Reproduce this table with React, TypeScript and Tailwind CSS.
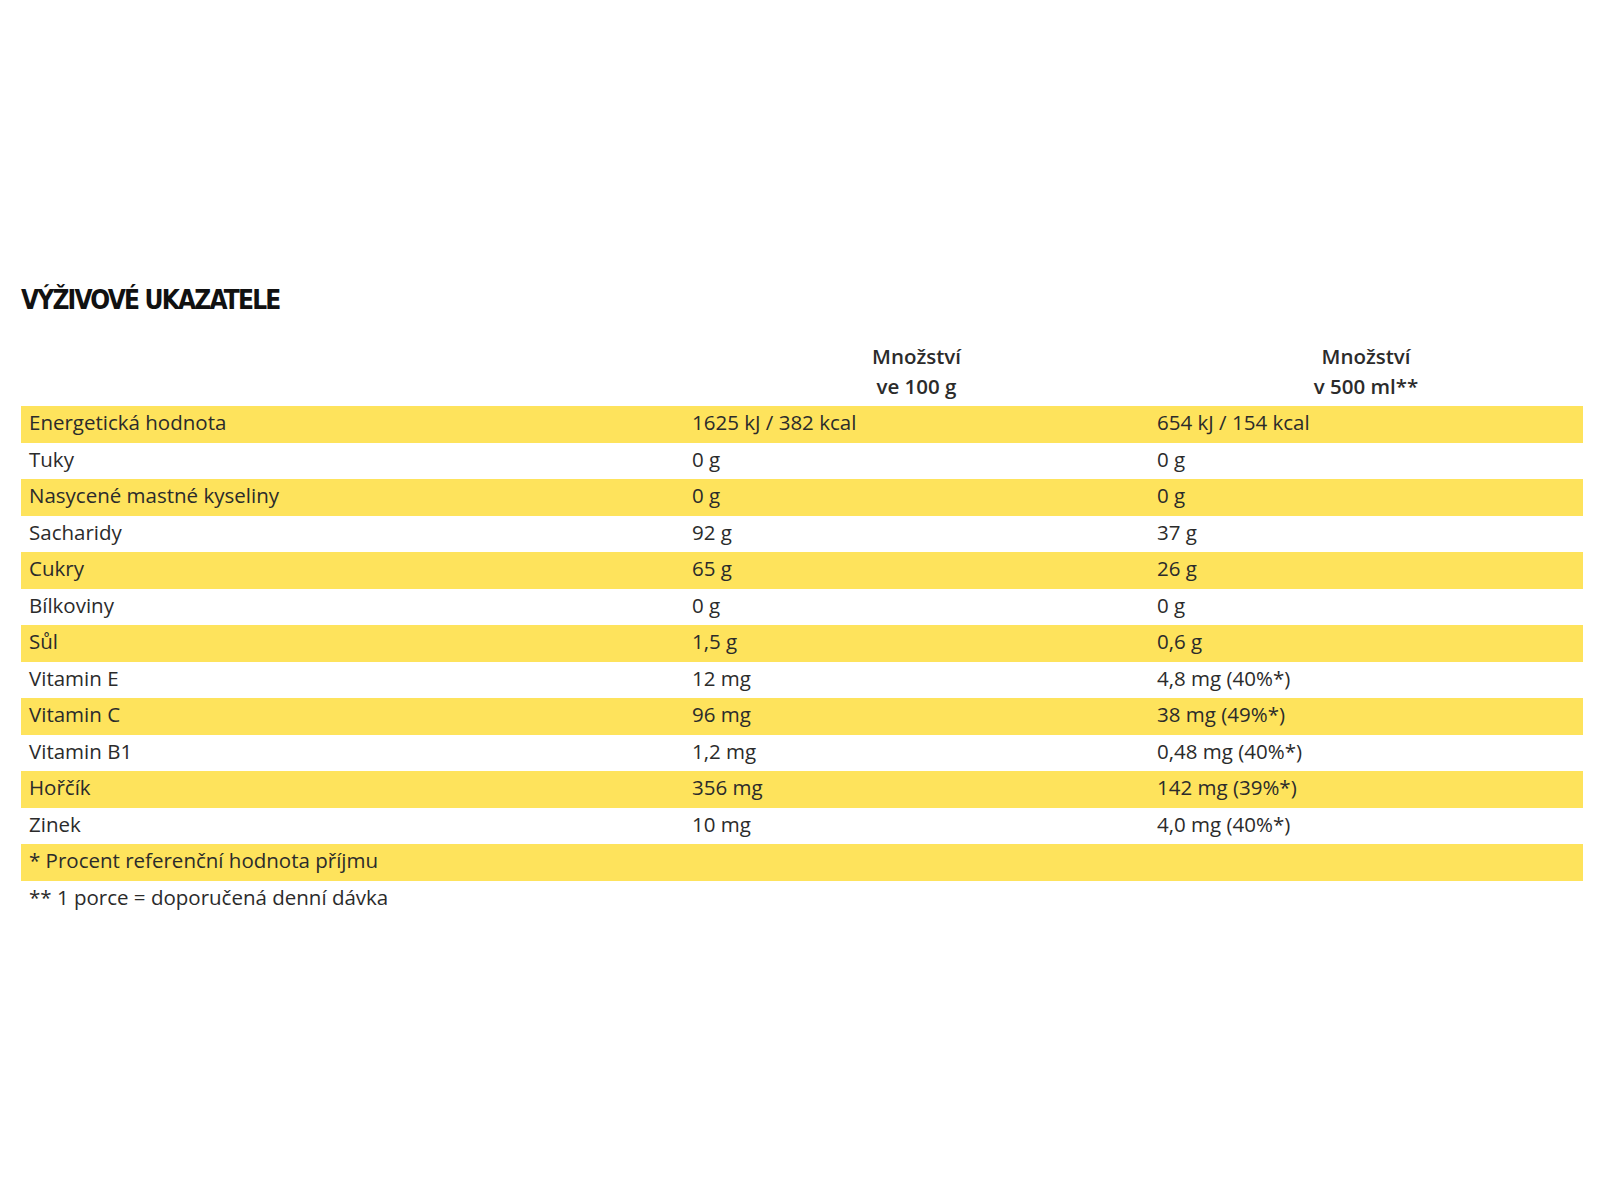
import React from "react";

const rows: [string, string, string][] = [
  ["Energetická hodnota", "1625 kJ / 382 kcal", "654 kJ / 154 kcal"],
  ["Tuky", "0 g", "0 g"],
  ["Nasycené mastné kyseliny", "0 g", "0 g"],
  ["Sacharidy", "92 g", "37 g"],
  ["Cukry", "65 g", "26 g"],
  ["Bílkoviny", "0 g", "0 g"],
  ["Sůl", "1,5 g", "0,6 g"],
  ["Vitamin E", "12 mg", "4,8 mg (40%*)"],
  ["Vitamin C", "96 mg", "38 mg (49%*)"],
  ["Vitamin B1", "1,2 mg", "0,48 mg (40%*)"],
  ["Hořčík", "356 mg", "142 mg (39%*)"],
  ["Zinek", "10 mg", "4,0 mg (40%*)"],
];

export default function App() {
  return (
    <div className="min-h-[1200px] w-[1600px] bg-white pl-[21px] pr-[17px] pt-[282px] font-['Open_Sans',sans-serif] text-[#2b2b2b]">
      <h2 className="m-0 font-['DejaVu_Sans_Condensed','DejaVu_Sans',sans-serif] text-[26px] font-bold leading-[36px] tracking-[-1.8px] text-[#111]">
        VÝŽIVOVÉ UKAZATELE
      </h2>
      <table className="mt-[23px] w-full border-collapse text-[20.5px]">
        <colgroup>
          <col className="w-[663px]" />
          <col className="w-[465px]" />
          <col />
        </colgroup>
        <thead>
          <tr>
            <th></th>
            <th className="pb-[5px] text-center font-semibold leading-[30px]">
              Množství
              <br />
              ve 100 g
            </th>
            <th className="pb-[5px] text-center font-semibold leading-[30px]">
              Množství
              <br />v 500 ml**
            </th>
          </tr>
        </thead>
        <tbody>
          {rows.map((r, i) => (
            <tr key={i} className={i % 2 === 0 ? "h-[36.5px] bg-[#fee35c]" : "h-[36.5px] bg-white"}>
              <td className="p-0 pb-[3px] pl-[8px] leading-[33px]">{r[0]}</td>
              <td className="p-0 pb-[3px] pl-[8px] leading-[33px]">{r[1]}</td>
              <td className="p-0 pb-[3px] pl-[8px] leading-[33px]">{r[2]}</td>
            </tr>
          ))}
          <tr className="h-[36.5px] bg-[#fee35c]">
            <td colSpan={3} className="p-0 pb-[3px] pl-[8px] leading-[33px]">
              * Procent referenční hodnota příjmu
            </td>
          </tr>
          <tr className="h-[36.5px]">
            <td colSpan={3} className="p-0 pb-[3px] pl-[8px] leading-[33px]">
              ** 1 porce = doporučená denní dávka
            </td>
          </tr>
        </tbody>
      </table>
    </div>
  );
}
